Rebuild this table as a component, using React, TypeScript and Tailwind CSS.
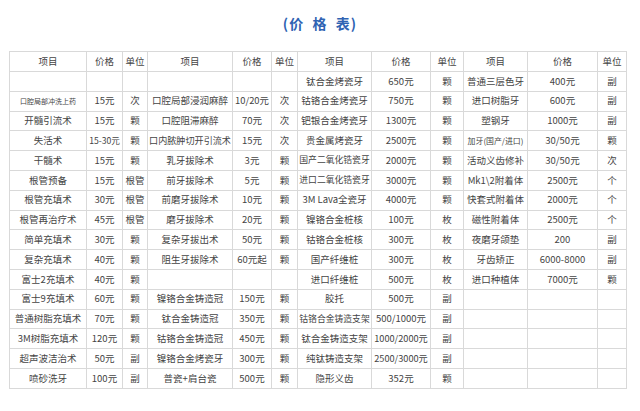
import React from "react"

const widths = [77, 36, 25, 85, 39, 26, 74, 59, 33, 64, 70, 29]

const header = ["项目", "价格", "单位", "项目", "价格", "单位", "项目", "价格", "单位", "项目", "价格", "单位"]

const rows: string[][] = [
  ["", "", "", "", "", "", "钛合金烤瓷牙", "650元", "颗", "普通三层色牙", "400元", "副"],
  ["口腔局部冲洗上药", "15元", "次", "口腔局部浸润麻醉", "10/20元", "次", "钴铬合金烤瓷牙", "750元", "颗", "进口树脂牙", "600元", "副"],
  ["开髓引流术", "15元", "颗", "口腔阻滞麻醉", "70元", "次", "钯银合金烤瓷牙", "1300元", "颗", "塑钢牙", "1000元", "副"],
  ["失活术", "15-30元", "颗", "口内脓肿切开引流术", "15元", "次", "贵金属烤瓷牙", "2500元", "颗", "加牙(国产/进口)", "30/50元", "颗"],
  ["干髓术", "15元", "颗", "乳牙拔除术", "3元", "颗", "国产二氧化锆瓷牙", "2000元", "颗", "活动义齿修补", "30/50元", "次"],
  ["根管预备", "15元", "根管", "前牙拔除术", "5元", "颗", "进口二氧化锆瓷牙", "3000元", "颗", "Mk1\\2附着体", "2500元", "个"],
  ["根管充填术", "30元", "根管", "前磨牙拔除术", "10元", "颗", "3M Lava全瓷牙", "4000元", "颗", "快套式附着体", "2000元", "个"],
  ["根管再治疗术", "45元", "根管", "磨牙拔除术", "20元", "颗", "镍铬合金桩核", "100元", "枚", "磁性附着体", "2500元", "个"],
  ["简单充填术", "30元", "颗", "复杂牙拔出术", "50元", "颗", "钴铬合金桩核", "300元", "枚", "夜磨牙颌垫", "200", "副"],
  ["复杂充填术", "40元", "颗", "阻生牙拔除术", "60元起", "颗", "国产纤维桩", "300元", "枚", "牙齿矫正", "6000-8000", "副"],
  ["富士2充填术", "40元", "颗", "", "", "", "进口纤维桩", "500元", "枚", "进口种植体", "7000元", "颗"],
  ["富士9充填术", "60元", "颗", "镍铬合金铸造冠", "150元", "颗", "胶托", "500元", "副", "", "", ""],
  ["普通树脂充填术", "70元", "颗", "钛合金铸造冠", "350元", "颗", "钴铬合金铸造支架", "500/1000元", "副", "", "", ""],
  ["3M树脂充填术", "120元", "颗", "钴铬合金铸造冠", "450元", "颗", "钛合金铸造支架", "1000/2000元", "副", "", "", ""],
  ["超声波洁治术", "50元", "副", "镍铬合金烤瓷牙", "300元", "颗", "纯钛铸造支架", "2500/3000元", "副", "", "", ""],
  ["喷砂洗牙", "100元", "副", "普瓷+肩台瓷", "500元", "颗", "隐形义齿", "352元", "颗", "", "", ""],
]

// 按格子宽度估算字号，放不下就缩小
const fitSize = (text: string, width: number) => {
  if (text === "口腔局部冲洗上药") return 7
  let em = 0
  for (const ch of text) em += ch.charCodeAt(0) > 255 ? 1 : 0.56
  if (em === 0) return 9.5
  return Math.min(9.5, Math.floor(((width - 3) / em) * 10) / 10)
}

export default function App() {
  return (
    <div className="w-[640px] h-[411px] bg-white text-[#444]" style={{ fontFamily: '"Noto Sans CJK SC", "Noto Sans", sans-serif' }}>
      <div className="h-[46px] flex items-center justify-center pt-[1px]">
        <h1 className="text-[14px] font-bold text-[#2f63b3] tracking-[1px]">(价&nbsp;&nbsp;格&nbsp;&nbsp;表)</h1>
      </div>
      <table className="ml-[9px] mt-[5px] table-fixed border-collapse w-[617px]">
        <colgroup>
          {widths.map((w, i) => (
            <col key={i} style={{ width: w }} />
          ))}
        </colgroup>
        <thead>
          <tr className="h-[20px]">
            {header.map((h, i) => (
              <th key={i} className="border border-[#d9d9d9] p-0 text-[9.5px] font-normal text-center leading-none text-[#444]">
                {h}
              </th>
            ))}
          </tr>
        </thead>
        <tbody>
          {rows.map((row, r) => (
            <tr key={r} className="h-[19.8px]">
              {row.map((c, i) => (
                <td
                  key={i}
                  className="border border-[#d9d9d9] p-0 text-center leading-none whitespace-nowrap"
                  style={{ fontSize: fitSize(c, widths[i]) }}
                >
                  {c}
                </td>
              ))}
            </tr>
          ))}
        </tbody>
      </table>
    </div>
  )
}
